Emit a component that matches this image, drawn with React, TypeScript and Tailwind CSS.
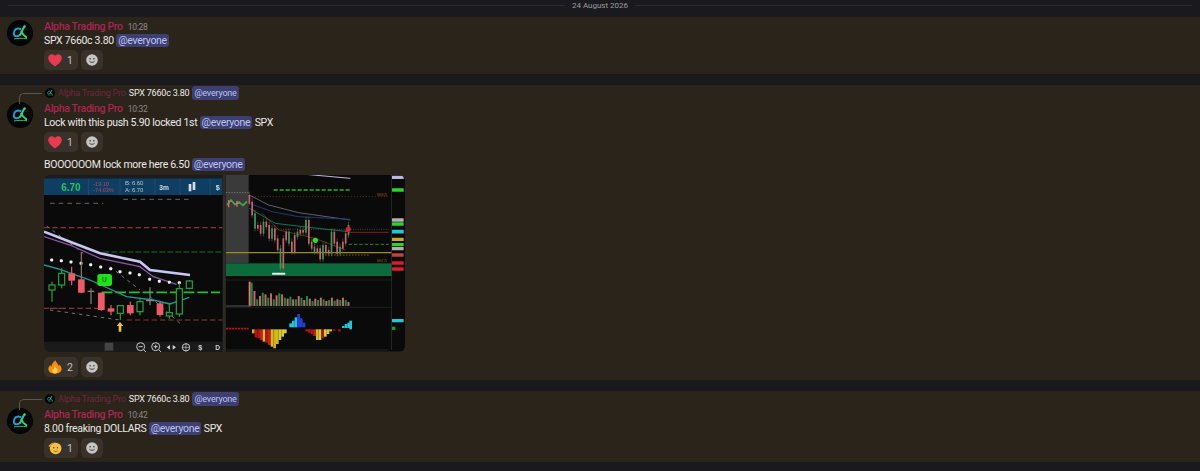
import React from "react";

function Logo({ size }: { size: number }) {
  return (
    <svg width={size} height={size} viewBox="0 0 26 26" className="shrink-0">
      <circle cx="13" cy="13" r="13" fill="#020405" />
      <path d="M13.500 9C10.200 7.300 6.800 9.800 6.800 13.200c0 3.400 3.800 4.200 6.400 1.400" fill="none" stroke="#1c9fd6" strokeWidth="2" strokeLinecap="round" />
      <path d="M13.200 14.600C15 12.400 15.600 9 17.200 6.800" fill="none" stroke="#25cfa0" strokeWidth="2" strokeLinecap="round" />
      <path d="M14.400 11.500c1 2.600 2.400 4.400 4.800 5.700" fill="none" stroke="#2fdc5f" strokeWidth="2" strokeLinecap="round" />
      <circle cx="17.600" cy="6.400" r="1.200" fill="#33e06a" />
      <path d="M7 19c3-.8 8.500-.9 13-.2" fill="none" stroke="#22c55e" strokeWidth="1" />
    </svg>
  );
}

function Mention() {
  return <span className="rounded-[3px] bg-[#3c3f70] px-[2px] text-[#bcc3f3]">@everyone</span>;
}

function Heart() {
  return (
    <svg width="14" height="13" viewBox="0 0 14 13">
      <path d="M7 12.600C2.600 9.400.2 7 .2 4.100.2 1.900 1.900.3 3.800.3 5.200.3 6.400 1 7 2.200 7.600 1 8.800.3 10.200.3c1.900 0 3.600 1.600 3.600 3.800 0 2.900-2.400 5.300-6.800 8.500z" fill="#ea3a50" />
    </svg>
  );
}

function Fire() {
  return (
    <svg width="14" height="14" viewBox="0 0 14 14">
      <path d="M7.400.3c.5 2.400 3 3.200 3 5.600.5-.3.8-.9.8-1.500 1.600 1.400 2.400 3 2.400 4.700 0 2.800-2.800 4.600-6.600 4.600S.4 11.900.4 9c0-1.800 1.100-3 2-4 .1.800.4 1.400 1 1.800C3.300 4 5.500 2.600 7.400.3z" fill="#f4900c" />
      <path d="M7 6.200c.3 1.500 2.600 2.500 2.600 4.600 0 1.500-1.200 2.600-2.600 2.600s-2.800-1-2.800-2.600c0-1 .6-1.700 1.100-2.200.1.500.3.800.6.900C5.800 7.900 6.500 7.200 7 6.200z" fill="#ffcc4d" />
    </svg>
  );
}

function Face() {
  return (
    <svg width="15" height="14" viewBox="0 0 15 14">
      <circle cx="8.200" cy="7.500" r="6.200" fill="#f9c23c" />
      <path d="M.5 5.200C2 2.400 4.500.8 8 1c-1 1.400-3.400 2-4.500 2.600L2.400 6.400z" fill="#e8963a" />
      <circle cx="6.200" cy="6.800" r=".8" fill="#5a3d1a" />
      <circle cx="10.200" cy="6.800" r=".8" fill="#5a3d1a" />
      <path d="M6 10c1.400.8 3 .8 4.300 0" fill="none" stroke="#5a3d1a" strokeWidth=".7" />
    </svg>
  );
}

function Reactions({ icon, count, className }: { icon: React.ReactNode; count: number; className: string }) {
  return (
    <div className={`flex gap-[3px] ${className}`}>
      <div className="flex h-5 w-[34px] items-center gap-[5px] rounded-[5px] bg-[#38322b] pl-[4px] text-[10.500px] tracking-normal text-[#c4c2bf]">
        <span className="flex w-[14px] justify-center">{icon}</span>
        <span>{count}</span>
      </div>
      <div className="flex h-5 w-[22px] items-center justify-center rounded-[5px] bg-[#38322b]">
        <svg width="12" height="12" viewBox="0 0 12 12">
          <circle cx="6" cy="6" r="5.800" fill="#c7c6c5" />
          <circle cx="4.100" cy="4.800" r=".8" fill="#38322b" />
          <circle cx="7.900" cy="4.800" r=".8" fill="#38322b" />
          <path d="M3.400 7.200c1.400 1.500 3.800 1.500 5.200 0" fill="none" stroke="#38322b" strokeWidth=".9" />
        </svg>
      </div>
    </div>
  );
}

function Head({ time }: { time: string }) {
  return (
    <div className="flex h-[15px] items-baseline gap-[5px] pt-[1px] leading-[15px]">
      <span className="text-[10.500px] font-medium text-[#a8264f]">Alpha Trading Pro</span>
      <span className="text-[8.500px] text-[#8d8a87]">{time}</span>
    </div>
  );
}

function Reply() {
  return (
    <div className="relative flex h-[14px] items-center gap-[3px] pl-[45px] text-[9px] leading-[14px] tracking-[-0.2px]">
      <div className="absolute left-[19px] top-[7px] h-[11px] w-[23px] rounded-tl-[5px] border-l border-t border-[#5a5651]" />
      <Logo size={10} />
      <span className="text-[#6f2440]">Alpha Trading Pro</span>
      <span className="text-[#ecebea]">SPX 7660c 3.80</span>
      <Mention />
    </div>
  );
}

function LeftChart() {
  const green: [number, number, number, number, number][] = [
    [36, 335, 395, 345, 360], [65, 295, 355, 310, 345], [241, 405, 450, 407, 430], [300, 388, 436, 395, 425],
    [418, 340, 440, 356, 432], [448, 330, 358, 333, 355], [388, 400, 446, 428, 438],
  ];
  const red: [number, number, number, number, number][] = [
    [95, 290, 346, 310, 332], [124, 245, 370, 328, 368], [184, 368, 422, 368, 420], [213, 405, 436, 415, 425], [271, 395, 436, 405, 430], [360, 395, 440, 400, 435],
  ];
  const dots = [[35, 270], [64, 272], [93, 276], [123, 280], [152, 284], [182, 291], [212, 296], [240, 305], [270, 309], [298, 314], [329, 328], [358, 334], [388, 337], [418, 338], [447, 338]];
  return (
    <svg viewBox="12 15 543 531" className="h-full w-[181px] shrink-0 blur-[0.4px]">
      <rect x="12" y="15" width="543" height="531" fill="#0a0a0a" />
      <rect x="12" y="15" width="543" height="10" fill="#1c1c1c" />
      <rect x="12" y="25" width="536" height="50" fill="#0e3f62" />
      <text x="64" y="64" fill="#22c55e" fontSize="30" fontWeight="700" fontFamily="Liberation Sans">6.70</text>
      <text x="160" y="48" fill="#b04a5e" fontSize="17" fontFamily="Liberation Sans">-19.10</text>
      <text x="160" y="67" fill="#b04a5e" fontSize="17" fontFamily="Liberation Sans">-74.03%</text>
      <text x="255" y="46" fill="#b9c3cc" fontSize="18" fontFamily="Liberation Sans">B: 6.60</text>
      <text x="255" y="67" fill="#b9c3cc" fontSize="18" fontFamily="Liberation Sans">A: 6.70</text>
      <text x="358" y="59" fill="#d5dde3" fontSize="20" fontWeight="700" fontFamily="Liberation Sans">3m</text>
      <path d="M450 42v22M462 36v24" stroke="#d5dde3" strokeWidth="8" />
      <text x="527" y="61" fill="#d5dde3" fontSize="22" fontWeight="700" fontFamily="Liberation Sans">$</text>
      <path d="M240 25v50M345 25v50M420 25v50M510 25v50M145 25v50" stroke="#2a5a7a" strokeWidth="1.500" />
      <path d="M30 100H190M250 88H450" stroke="#777" strokeWidth="2.500" strokeDasharray="14 12" />
      <path d="M12 173H548M12 415H180M260 450H548M30 415H70" stroke="#8a3434" strokeWidth="3.500" strokeDasharray="16 9" />
      <path d="M190 246H548" stroke="#1b6a20" strokeWidth="3.500" strokeDasharray="18 6" />
      <path d="M20 168L130 250M210 290L300 360M330 380L420 460M30 420L240 450" stroke="#888" strokeWidth="2.500" strokeDasharray="10 12" />
      <path d="M185 367H540" stroke="#1fc41f" strokeWidth="5" strokeDasharray="32 9" />
      <path d="M12 200L90 225L180 265L300 290L340 320L410 343" fill="none" stroke="#8c55a3" strokeWidth="4" />
      <path d="M12 185L90 215L180 250L300 275L330 300L450 315" fill="none" stroke="#c9c8f4" strokeWidth="8" />
      <path d="M12 285L60 298L150 330L260 380L340 390L390 402L448 382" fill="none" stroke="#1f9a96" strokeWidth="4" />
      {dots.map(([x, y]) => <rect key={x} x={x - 4.500} y={y - 4.500} width="9" height="9" rx="3" fill="#f2f2f2" />)}
      {green.map(([x, a, b, c, d]) => (
        <g key={x}>
          <path d={`M${x} ${a}V${c}M${x} ${d}V${b}`} stroke="#22a83e" strokeWidth="3.500" />
          <rect x={x - 9} y={c} width="18" height={d - c} fill="#0a0a0a" stroke="#22a83e" strokeWidth="3.500" />
        </g>
      ))}
      {red.map(([x, a, b, c, d]) => (
        <g key={x}>
          <path d={`M${x} ${a}V${b}`} stroke={x === 124 ? "#8d7c74" : "#e0646c"} strokeWidth="3.500" />
          <rect x={x - 10} y={c} width="20" height={d - c} fill="#f05a66" />
        </g>
      ))}
      <path d="M153 355V402M143 364H163M330 352V406M318 392H342" stroke="#8d8178" strokeWidth="3.500" />
      <rect x="172" y="312" width="44" height="36" rx="7" fill="#1fe01a" />
      <text x="186" y="337" fill="#0a7a14" fontSize="20" fontWeight="700" fontFamily="Liberation Sans">U</text>
      <path d="M240 456l-10 12h6v17h8v-17h6z" fill="#f2c23c" />
      <rect x="12" y="515" width="536" height="31" fill="#1a1a1a" />
      <rect x="548" y="15" width="7" height="531" fill="#2b2b2b" />
      <rect x="194" y="518" width="26" height="24" fill="#444" />
      <circle cx="302" cy="530" r="12" fill="none" stroke="#c9c9c9" strokeWidth="3" />
      <circle cx="347" cy="530" r="12" fill="none" stroke="#c9c9c9" strokeWidth="3" />
      <path d="M311 539l7 7M356 539l7 7M296 530h12M341 530h12M347 524v12" stroke="#c9c9c9" strokeWidth="3" />
      <path d="M380 532l10-7v14zM408 532l-10-7v14z" fill="#d0d0d0" />
      <circle cx="438" cy="532" r="11" fill="none" stroke="#c9c9c9" strokeWidth="3" />
      <path d="M438 520v24M426 532h24" stroke="#c9c9c9" strokeWidth="2" />
      <text x="475" y="540" fill="#d0d0d0" fontSize="22" fontWeight="700" fontFamily="Liberation Sans">$</text>
      <text x="526" y="540" fill="#d0d0d0" fontSize="20" fontWeight="700" fontFamily="Liberation Sans">D</text>
    </svg>
  );
}

function RightChart() {
  const closes = [95, 130, 170, 165, 185, 155, 165, 200, 175, 205, 235, 290, 205, 185, 215, 240, 195, 185, 180, 182, 150, 215, 230, 240, 235, 262, 225, 240, 245, 185, 215, 245, 230, 215, 190, 165];
  const vols = [70, 45, 20, 30, 40, 35, 25, 38, 20, 32, 38, 35, 25, 22, 28, 20, 20, 30, 25, 18, 30, 22, 15, 22, 18, 25, 20, 15, 18, 25, 16, 20, 18, 25, 18, 12];
  const hist = [
    [94, 478, 490, "#e0a81e"], [102, 478, 502, "#b31414"], [110, 478, 505, "#b31414"], [118, 478, 510, "#d01818"], [126, 478, 515, "#c9c01e"], [134, 478, 518, "#b31414"], [142, 478, 525, "#d01818"], [150, 478, 530, "#c9c01e"], [158, 478, 535, "#e0a81e"], [166, 478, 522, "#c9c01e"], [174, 478, 510, "#d6cc30"], [182, 478, 500, "#d6cc30"], [190, 478, 490, "#d6cc30"],
    [206, 472, 460, "#21c7d8"], [214, 472, 452, "#21c7d8"], [222, 472, 442, "#21c7d8"], [230, 472, 432, "#2040d8"], [238, 472, 445, "#2040d8"], [246, 472, 458, "#2040d8"],
    [254, 478, 484, "#b31414"], [262, 478, 488, "#b31414"], [270, 478, 492, "#b31414"], [278, 478, 498, "#d01818"], [286, 478, 510, "#c9c01e"], [294, 478, 510, "#d6cc30"], [302, 478, 505, "#b31414"], [310, 478, 500, "#d6cc30"], [318, 478, 492, "#d6cc30"], [326, 478, 484, "#d6cc30"],
    [336, 478, 482, "#b31414"], [352, 478, 484, "#b31414"], [364, 474, 468, "#21c7d8"], [372, 474, 462, "#21c7d8"], [380, 474, 458, "#21c7d8"], [386, 478, 452, "#21c7d8"],
  ] as [number, number, number, string][];
  const labels: [number, string, number][] = [[22, "#b9b9e8", 10], [60, "#2bd52b", 10], [150, "#b0b0b0", 10], [162, "#2bd52b", 10], [185, "#21c7d8", 11], [208, "#c9a91e", 10], [224, "#2bd52b", 10], [236, "#b0b0b0", 10], [255, "#c34040", 10], [279, "#e01e1e", 10], [297, "#e01e1e", 10], [452, "#21c7d8", 10]];
  return (
    <svg viewBox="12 15 537 531" className="h-full w-[179px] shrink-0 blur-[0.5px]">
      <rect x="12" y="15" width="537" height="531" fill="#0a0a0a" />
      <rect x="12" y="15" width="68" height="265" fill="#3a3a3a" />
      <rect x="12" y="280" width="498" height="38" fill="#0b6b3c" />
      <path d="M240 12L385 25" stroke="#b9b9e8" strokeWidth="3" />
      <path d="M155 60H385" stroke="#2bb52b" strokeWidth="4" strokeDasharray="12 6" />
      <path d="M80 80H500" stroke="#6b3a16" strokeWidth="2" strokeDasharray="4 5" />
      <path d="M12 68H80" stroke="#999" strokeWidth="2" strokeDasharray="4 4" />
      <path d="M15 105l12-15 12 14 12-8 12 10 12-12" fill="none" stroke="#4ea34e" strokeWidth="5" />
      <path d="M20 90v22M45 92v18" stroke="#e0646c" strokeWidth="4" />
      <path d="M82 75L140 105L230 128L385 150" fill="none" stroke="#8a8aa8" strokeWidth="2" />
      <path d="M82 100L150 125L230 140L385 148" fill="none" stroke="#24366e" strokeWidth="3" />
      <path d="M82 115L160 160L260 172L380 185" fill="none" stroke="#11735c" strokeWidth="3" />
      <path d="M120 130L170 180L280 205L370 240" fill="none" stroke="#7d4e1c" strokeWidth="2" />
      <path d="M155 178H500" stroke="#777" strokeWidth="1.500" strokeDasharray="3 4" />
      <path d="M380 187H500" stroke="#8c1c1c" strokeWidth="3" />
      <path d="M380 223H500" stroke="#2a8a2a" strokeWidth="3" strokeDasharray="10 6" />
      <path d="M12 248H510" stroke="#9a8f1e" strokeWidth="4" />
      <path d="M300 255H440" stroke="#9a8f1e" strokeWidth="2" strokeDasharray="5 4" />
      <text x="465" y="79" fill="#a85a1c" fontSize="9" fontFamily="Liberation Sans">6909.25</text>
      <text x="465" y="275" fill="#a85a1c" fontSize="9" fontFamily="Liberation Sans">6907.75</text>
      {closes.map((c, i) => {
        const x = 82 + i * 8.5;
        const up = i % 3 === 2;
        const prev = i === 0 ? 75 : closes[i - 1];
        const top = Math.min(c, prev);
        const bot = Math.max(c, prev) + 6;
        return (
          <g key={i}>
            <path d={`M${x} ${top - 10}V${bot + 8}`} stroke={up ? "#3d9a55" : "#a8585a"} strokeWidth="1.500" />
            <rect x={x - 2.500} y={top} width="5" height={bot - top} fill={up ? "#3d9a55" : "#c4666c"} />
          </g>
        );
      })}
      <circle cx="280" cy="211" r="8" fill="#1ee61a" />
      <circle cx="379" cy="178" r="8" fill="#e01e28" />
      <rect x="150" y="308" width="40" height="6" rx="2" fill="#e8e8e8" />
      <path d="M12 330H510M12 412H510" stroke="#2a2a2a" strokeWidth="2" />
      <rect x="80" y="335" width="6" height="74" fill="#e8727a" />
      {vols.map((v, i) => (
        <rect key={i} x={86 + i * 8.300} y={408 - v} width="6" height={v} fill={i % 2 === 0 ? "#1f8a3f" : "#c4666c"} />
      ))}
      <path d="M12 408H85" stroke="#555" strokeWidth="3" />
      <path d="M12 476H80" stroke="#b31414" strokeWidth="5" strokeDasharray="7 2" />
      {hist.map(([x, a, b, col]) => (
        <rect key={x} x={x - 4} y={Math.min(a, b)} width="8" height={Math.abs(a - b)} fill={col} />
      ))}
      <path d="M12 540H500" stroke="#333" strokeWidth="2" />
      <rect x="508" y="15" width="2" height="525" fill="#333" />
      {labels.map(([y, c, h]) => <rect key={y} x="510" y={y - h / 2} width="35" height={h} rx="1" fill={c} />)}
      <rect x="510" y="470" width="10" height="10" fill="#14a014" />
      <rect x="12" y="544" width="537" height="2" fill="#222" />
    </svg>
  );
}

function Message({ children, time, reply, className }: { children: React.ReactNode; time: string; reply?: boolean; className: string }) {
  return (
    <div className={`bg-[#2b241b] ${className}`}>
      {reply && <Reply />}
      <div className="flex pl-[7px]">
        <div className="mt-[2px]"><Logo size={26} /></div>
        <div className="ml-[11px] min-w-0">
          <Head time={time} />
          {children}
        </div>
      </div>
    </div>
  );
}

export default function App() {
  return (
    <div className="h-[471px] w-[1200px] overflow-hidden bg-[#1a1a1e] text-[10.500px] leading-[15px] tracking-[-0.3px] text-[#e9e8e6]" style={{ fontFamily: "Roboto, 'Noto Sans', 'Liberation Sans', sans-serif" }}>
      <div className="flex h-[11px] items-center gap-[7px] px-[8px]">
        <div className="h-px flex-1 bg-[#28282d]" />
        <span className="text-[8px] tracking-normal text-[#9b9b9f]">24 August 2026</span>
        <div className="h-px flex-1 bg-[#28282d]" />
      </div>
      <div className="mt-[6px] flex flex-col gap-[11px]">
        <Message time="10:28" className="h-[57px] pt-[1px]">
          <div className="h-[15px]">SPX 7660c 3.80 <Mention /></div>
          <Reactions icon={<Heart />} count={1} className="mt-[2px]" />
        </Message>
        <Message time="10:32" reply className="h-[295px] pt-[1px]">
          <div className="h-[15px]">Lock with this push 5.90 locked 1st <Mention /> SPX</div>
          <Reactions icon={<Heart />} count={1} className="mt-[2px]" />
          <div className="mt-[5px] h-[15px]">BOOOOOOM lock more here 6.50 <Mention /></div>
          <div className="mt-[3px] flex h-[177px] w-[361px] gap-[1px] overflow-hidden rounded-[6px]">
            <LeftChart />
            <RightChart />
          </div>
          <Reactions icon={<Fire />} count={2} className="mt-[5px]" />
        </Message>
        <Message time="10:42" reply className="h-[71px] pt-[1px]">
          <div className="h-[15px]">8.00 freaking DOLLARS <Mention /> SPX</div>
          <Reactions icon={<Face />} count={1} className="mt-[2px]" />
        </Message>
      </div>
    </div>
  );
}
